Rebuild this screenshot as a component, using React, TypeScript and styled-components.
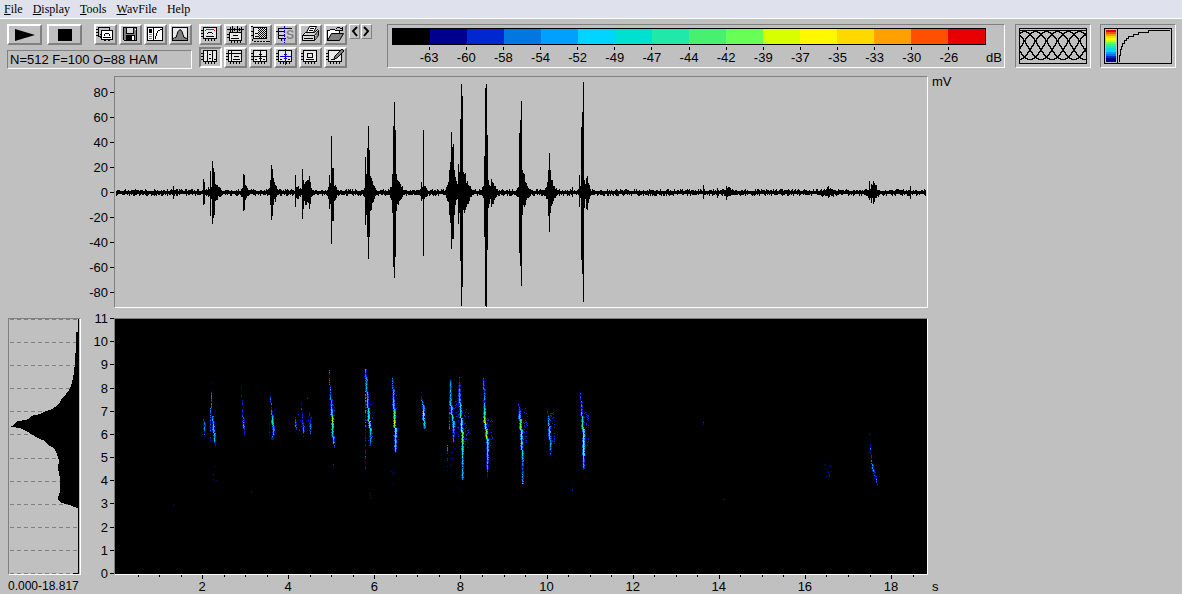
import React from "react";
import styled, { createGlobalStyle, css } from "styled-components";

const GlobalStyle = createGlobalStyle`
  *, *::before, *::after { box-sizing: border-box; }
  body { margin: 0; background: #c0c0c0; }
`;

const Page = styled.div`
  min-height: 100vh;
  background: #c0c0c0;
  color: #000;
  font: 13px/15px "Liberation Sans", Arial, sans-serif;
`;

/* ---------- menu ---------- */

const MenuBar = styled.nav`
  display: flex;
  gap: 10px;
  height: 19px;
  padding-left: 4px;
  background: #dfe2ec;
  border-bottom: 1px solid #fff;
`;

const MenuItem = styled.button`
  padding: 0;
  border: 0;
  background: none;
  color: #000;
  font: 12px/18px "Liberation Serif", "Times New Roman", serif;
`;

/* ---------- toolbar ---------- */

const Toolbar = styled.header`
  display: flex;
  align-items: flex-start;
  height: 57px;
  padding: 5px 6px 0 7px;
`;

const sunken = css`
  border: 1px solid;
  border-color: #808080 #fff #fff #808080;
`;

const ToolColumn = styled.div`
  display: flex;
  flex-direction: column;
  flex: none;
  gap: 5px;
  width: 185px;
  margin-right: 7px;
`;

const ToolRow = styled.div`
  display: flex;
  gap: 2px;
`;

const ToolGrid = styled.div`
  display: grid;
  flex: none;
  grid-template-columns: repeat(6, 23px);
  gap: 2px;
  margin-right: 2px;
`;

const ToolButton = styled.button<{ $pressed?: boolean }>`
  display: flex;
  align-items: center;
  justify-content: center;
  width: 23px;
  height: 21px;
  padding: 0;
  background: #c0c0c0;
  border: 2px solid;
  border-color: ${(p) => (p.$pressed ? "#808080 #fff #fff #808080" : "#fff #808080 #808080 #fff")};
`;

const TransportButton = styled(ToolButton)`
  width: 35px;
`;

const TransportGroup = styled.div`
  display: flex;
  gap: 5px;
  margin-right: 10px;
`;

const StepButton = styled(ToolButton)`
  width: 11px;
  height: 15px;
  border-width: 1px;
`;

const StepGroup = styled.div`
  display: flex;
  flex: none;
  gap: 1px;
  margin-right: 15px;
`;

const Settings = styled.output`
  display: block;
  height: 19px;
  padding-left: 2px;
  line-height: 17px;
  white-space: nowrap;
  ${sunken}
`;

/* ---------- colour legend ---------- */

const Legend = styled.section`
  ${sunken}
  display: grid;
  grid-template-columns: 1fr 16px;
  flex: 1;
  min-width: 0;
  height: 44px;
  margin-right: 10px;
  padding: 3px 2px 0 4px;
`;

const Swatches = styled.div`
  display: flex;
  height: 17px;
  border: 1px solid #000;
`;

const Swatch = styled.span<{ $color: string }>`
  flex: 1;
  background: ${(p) => p.$color};
`;

const LegendScale = styled.div`
  display: grid;
  grid-row: 2;
  grid-template-columns: repeat(32, 1fr);
`;

const LegendLabel = styled.span<{ $index: number }>`
  display: flex;
  flex-direction: column;
  align-items: center;
  grid-column: ${(p) => p.$index * 2 + 2} / span 2;
  &::before {
    content: "";
    width: 1px;
    height: 3px;
    background: #000;
  }
`;

const LegendUnit = styled.span`
  grid-row: 2;
  padding-top: 3px;
`;

const CurvePanel = styled.button`
  ${sunken}
  flex: none;
  width: 76px;
  height: 44px;
  margin-right: 9px;
  padding: 3px;
  background: #c0c0c0;
  &:last-child { margin-right: 0; }
  svg { display: block; }
`;

/* ---------- plots ---------- */

const Workspace = styled.main`
  display: grid;
  grid-template-columns: 73px 33px minmax(0, 1fr) 254px;
  padding-left: 8px;
`;

const WaveRow = styled.div`
  display: grid;
  grid-column: 1 / -1;
  grid-template-columns: subgrid;
  height: 232px;
  margin-bottom: 10px;
`;

const SpectrumRow = styled(WaveRow)`
  height: 257px;
  margin-bottom: 0;
`;

const WaveAxis = styled.div`
  grid-column: 2;
  padding-top: 4px;
`;

const FrequencyAxis = styled.div`
  display: flex;
  flex-direction: column;
  margin: -11px 0 -10px;
`;

const AxisLabel = styled.div<{ $fill?: boolean }>`
  display: flex;
  align-items: center;
  justify-content: flex-end;
  gap: 2px;
  ${(p) => (p.$fill ? "flex: 1;" : "height: 25px;")}
  &::after {
    content: "";
    width: 4px;
    height: 1px;
    background: #000;
  }
`;

const Frame = styled.div`
  ${sunken}
  min-width: 0;
  min-height: 0;
  height: 100%;
  svg { display: block; width: 100%; height: 100%; }
`;

const UnitLabel = styled.span`
  padding-left: 4px;
  line-height: 12px;
`;

const Caption = styled.div`
  padding-top: 4px;
  font-size: 12px;
  white-space: nowrap;
`;

const TimeAxis = styled.div`
  grid-column: 3;
  min-width: 0;
`;

const TimeTicks = styled.svg`
  display: block;
  width: 100%;
  height: 4px;
`;

const TimeLabels = styled.div`
  display: flex;
  margin: 0 -6px 0 2px;
`;

const TimeLabel = styled.span<{ $seconds: number }>`
  flex: ${(p) => p.$seconds} 1 0;
  text-align: center;
`;

const AxisUnit = styled.span`
  padding: 4px 0 0 4px;
`;

/* ---------- data ---------- */

const COLORS = [
  "#000000", "#00008f", "#0028d0", "#0078e0", "#00a0ff", "#00d4ff", "#00e0d0", "#20e8a8",
  "#48f070", "#68ff58", "#d8ff00", "#fff800", "#ffd800", "#ffa000", "#ff5000", "#e80000",
];

const DECIBELS = [-63, -60, -58, -54, -52, -49, -47, -44, -42, -39, -37, -35, -33, -30, -26];
const MILLIVOLTS = [80, 60, 40, 20, 0, -20, -40, -60, -80];
const KILOHERTZ = [11, 10, 9, 8, 7, 6, 5, 4, 3, 2, 1, 0];
const SECONDS = [2, 4, 6, 8, 10, 12, 14, 16, 18];

/* repeatable noise, so that the plots are the same on every load */
function makeRandom(seed: number) {
  let a = seed;
  return () => {
    a = (a + 0x6d2b79f5) | 0;
    let t = Math.imul(a ^ (a >>> 15), 1 | a);
    t = (t + Math.imul(t ^ (t >>> 7), 61 | t)) ^ t;
    return ((t ^ (t >>> 14)) >>> 0) / 4294967296;
  };
}

/* column, height above zero, depth below zero */
const PEAKS: [number, number, number][] = [
  [173, 6, 6], [203, 13, 12], [204, 10, 11], [210, 21, 23], [212, 31, 31], [213, 24, 25], [214, 20, 22],
  [243, 18, 18], [244, 17, 17], [270, 12, 12], [271, 27, 27], [272, 23, 23], [273, 11, 12],
  [295, 17, 14], [302, 23, 26], [303, 12, 16], [308, 12, 10], [309, 16, 16], [310, 10, 11],
  [329, 17, 16], [331, 56, 51], [332, 24, 28], [333, 24, 28], [365, 35, 32], [366, 18, 22],
  [367, 44, 44], [368, 66, 66], [369, 42, 44], [370, 16, 18], [371, 12, 12], [392, 18, 20],
  [393, 66, 74], [394, 90, 85], [395, 62, 64], [396, 18, 18], [421, 10, 8], [423, 62, 63],
  [449, 22, 22], [450, 30, 30], [451, 60, 56], [452, 45, 46], [453, 48, 46], [454, 22, 22],
  [458, 28, 31], [459, 20, 20], [460, 73, 68], [461, 108, 113], [462, 96, 94], [463, 20, 17],
  [484, 36, 44], [485, 104, 113], [486, 108, 114], [487, 57, 57], [488, 12, 14], [491, 13, 14],
  [519, 59, 60], [520, 72, 73], [521, 91, 93], [522, 22, 22], [525, 10, 11], [548, 22, 23],
  [549, 39, 39], [550, 22, 20], [552, 12, 11], [572, 5, 4], [579, 17, 14], [581, 65, 67],
  [582, 80, 81], [583, 110, 109], [584, 12, 15], [586, 14, 16], [587, 16, 17],
  [703, 7, 6], [717, 4, 5], [726, 6, 7], [828, 6, 5], [869, 11, 7], [871, 8, 10], [873, 11, 11],
  [874, 8, 8], [910, 6, 6],
];

/* centre, half width, amplitude of the swelling around each call */
const SWELLS: [number, number, number][] = [
  [214, 9, 8], [244, 5, 7], [273, 6, 11], [298, 5, 5], [306, 8, 11], [332, 6, 14], [370, 7, 18],
  [396, 8, 20], [423, 5, 9], [452, 8, 26], [464, 9, 20], [487, 7, 15], [492, 6, 12], [523, 8, 18],
  [550, 8, 15], [583, 6, 14], [587, 4, 13], [873, 7, 9], [727, 8, 3], [828, 9, 3],
];

function buildWave() {
  const rnd = makeRandom(7);
  const peaks = new Map(PEAKS.map(([x, up, down]) => [x, [up, down]]));
  let d = "";
  for (let x = 116; x < 926; x++) {
    let swell = 0;
    SWELLS.forEach(([c, w, a]) => {
      swell = Math.max(swell, a * Math.max(0, 1 - Math.abs(x - c) / w) ** 1.4);
    });
    const side = () => Math.round(0.8 + rnd() ** 1.5 * 2.4 + swell * (0.55 + rnd() * 0.5));
    const peak = peaks.get(x) ?? [0, 0];
    const up = Math.max(side(), peak[0]);
    const down = Math.max(side(), peak[1]);
    d += `M${x} ${192 - up}h1v${up + down + 1}h-1z`;
  }
  return d;
}

/* each streak is a run of x, y, palette level */
const STREAKS: [number, number, number][][] = [
  [[203, 417, 1], [204, 424, 4], [204, 438, 2]],
  [[211, 379, 0], [211, 391, 1], [211, 394, 3], [210, 420, 3], [210, 441, 1]],
  [[212, 416, 4], [213, 425, 6], [214, 440, 5], [215, 446, 1]],
  [[241, 385, 1], [242, 410, 2], [243, 424, 4], [244, 436, 2]],
  [[270, 396, 3], [271, 410, 3], [272, 420, 7], [273, 430, 4], [272, 440, 3]],
  [[269, 423, 2], [269, 435, 1]],
  [[295, 417, 2], [295, 424, 4], [296, 430, 1]],
  [[301, 400, 1], [302, 420, 3], [303, 430, 4], [303, 434, 1]],
  [[307, 397, 3], [307, 400, 1]],
  [[309, 412, 1], [310, 424, 4], [310, 434, 2]],
  [[329, 370, 3], [329, 378, 2], [330, 392, 3], [331, 408, 5], [332, 421, 10], [332, 432, 6], [333, 442, 4], [334, 448, 1]],
  [[333, 464, 2], [333, 471, 1]],
  [[365, 369, 4], [366, 385, 4], [367, 398, 5], [368, 418, 7], [369, 424, 9], [370, 432, 5], [370, 446, 2]],
  [[365, 369, 3], [365, 410, 3], [365, 430, 2], [365, 469, 2]],
  [[392, 378, 3], [393, 400, 5], [394, 418, 10], [395, 438, 8], [395, 446, 7], [395, 455, 1]],
  [[421, 392, 1], [421, 398, 3], [423, 407, 5], [423, 413, 10], [424, 429, 3]],
  [[450, 379, 3], [450, 400, 5], [451, 412, 7], [453, 424, 6], [453, 447, 1]],
  [[449, 395, 2], [449, 430, 3]],
  [[459, 376, 2], [459, 395, 5], [460, 410, 6], [461, 425, 10], [462, 438, 9], [462, 455, 5], [462, 480, 4]],
  [[458, 390, 2], [458, 448, 1]],
  [[447, 445, 3], [447, 471, 1]],
  [[483, 378, 3], [484, 400, 4], [484, 420, 9], [486, 432, 10], [487, 445, 8], [487, 465, 4], [487, 478, 1]],
  [[518, 402, 1], [519, 412, 5], [520, 425, 9], [521, 435, 10], [521, 445, 7], [522, 455, 5], [522, 470, 3], [522, 484, 4]],
  [[547, 410, 2], [548, 420, 4], [549, 432, 7], [550, 448, 4], [550, 458, 1]],
  [[580, 392, 2], [581, 410, 4], [582, 422, 7], [583, 435, 9], [583, 450, 12], [583, 457, 6], [583, 470, 3]],
  [[869, 433, 1], [870, 446, 2], [871, 460, 3], [872, 467, 4], [876, 480, 3], [877, 486, 1]],
  [[572, 487, 1], [572, 492, 1]],
  [[703, 420, 1], [703, 425, 2]],
  [[825, 464, 1], [830, 478, 1]],
];

/* faint echoes: left, top, width, height, number of specks */
const ECHOES: [number, number, number, number, number][] = [
  [298, 412, 14, 26, 26], [271, 410, 5, 24, 12], [446, 440, 9, 30, 18], [461, 408, 8, 40, 60],
  [452, 400, 6, 34, 34], [485, 416, 8, 34, 50], [522, 408, 6, 36, 50], [550, 412, 5, 32, 36],
  [584, 410, 5, 36, 42], [366, 400, 7, 46, 26], [393, 395, 6, 46, 24], [331, 398, 4, 48, 22],
  [211, 410, 6, 36, 14], [242, 408, 4, 26, 10], [213, 465, 4, 22, 5], [369, 492, 4, 7, 5],
  [390, 464, 4, 24, 5], [456, 484, 4, 8, 3], [723, 497, 2, 4, 2], [172, 504, 3, 3, 2],
  [823, 460, 9, 18, 8], [868, 446, 4, 22, 10], [248, 491, 4, 3, 2],
];

function buildSpectrogram() {
  const rnd = makeRandom(21);
  const paths: string[] = COLORS.map(() => "");
  const dot = (x: number, y: number, level: number) => {
    const l = Math.max(0, Math.min(COLORS.length - 1, Math.round(level)));
    if (l > 0) paths[l] += `M${x} ${y}h1v1h-1z`;
  };
  ECHOES.forEach(([x, y, w, h, n]) => {
    for (let i = 0; i < n; i++) {
      dot(x + Math.floor(rnd() * w), y + Math.floor(rnd() * h), n > 20 ? 1 + rnd() * 1.4 : 1);
    }
  });
  STREAKS.forEach((points) => {
    for (let i = 1; i < points.length; i++) {
      const [x0, y0, l0] = points[i - 1];
      const [x1, y1, l1] = points[i];
      for (let y = y0; y < y1; y++) {
        const t = (y - y0) / (y1 - y0);
        const level = l0 + (l1 - l0) * t;
        const x = Math.round(x0 + (x1 - x0) * t);
        if (level > 3) {
          dot(x - 1, y, Math.min(3, level * 0.5 * rnd()));
          dot(x + 1, y, Math.min(5, level * (0.1 + 0.6 * rnd())));
        }
        dot(x, y, level + rnd() * 3 - 2.2);
      }
    }
  });
  return paths;
}

const WAVE = buildWave();
const SPECTROGRAM = buildSpectrogram();

const SPECTRUM =
  "M79 319H78V332H76V345H76L75 362L74 372L73 378L71 386L69 390L66 394L62 398L60 402L57 406L52 409" +
  "L46 411L40 414L31 416L30 418L26 420L18 421L15 423L14 425L11 426V427L20 428L28 432L33 435L38 438L45 441" +
  "L48 445L54 448L56 452L58 457L59 461L58 468L60 478L60 492L59 495L58 498V500L62 503L70 505L77 508H78V573H73V574H79Z";

/* ---------- icons ---------- */

const Icon = ({ children }: { children: React.ReactNode }) => (
  <svg width="19" height="17" viewBox="0 0 19 17" fill="none" stroke="#000" shapeRendering="crispEdges" aria-hidden="true">
    {children}
  </svg>
);

const PlotFrame = () => (
  <>
    <path d="M2 2h14v11H2z" fill="#e8e8e8" stroke="none" />
    <path d="M2.500 1.500h13v11h-13zM0 4.500h2M0 7.500h2M0 10.500h2M4.500 13v2M7.500 13v2M10.500 13v2M13.500 13v2" />
  </>
);

const icons: Record<string, React.ReactNode> = {
  "Copy plots": (
    <Icon>
      <path d="M2.5 1.5h11v9h-11zM0 3.5h2M0 6.5h2M0 9.5h2" />
      <path d="M5.5 4.5h11v9h-11z" fill="#fff" />
      <path d="M4 8.5h2M4 11.5h2M9 7.5h4M8.5 8v2M13.5 8v2M7 11.5h8M8 14.5h2M12 14.5h2" />
    </Icon>
  ),
  "Save": (
    <Icon>
      <path d="M2.5 1.5h13v13h-12l-1-1z" fill="#808080" />
      <path d="M5.5 1.5h7v6h-7z" fill="#d8d8d8" />
      <path d="M5 9h9v6H5z" fill="#000" stroke="none" />
      <path d="M11 10h2v4h-2z" fill="#fff" stroke="none" />
      <path d="M14 3.5h1" stroke="#fff" />
    </Icon>
  ),
  "Transfer curve": (
    <Icon>
      <path d="M1.5 1.5h15v13h-15z" fill="#fff" />
      <path d="M3 3h3v4H3z" fill="#000" stroke="none" />
      <path d="M3 8.5h3M3 10.5h3M3 12.5h3" stroke="#808080" />
      <path d="M7.5 2v12M9.5 13v-3M10.5 10V7M11.5 7V5M12 4.5h2M14 3.5h2" />
    </Icon>
  ),
  "Analysis window": (
    <Icon>
      <path d="M1.5 1.5h15v13h-15z" fill="#e8e8e8" />
      <path d="M2 14v-1h1l2-2 1-3 1-3 2-2 2 2 1 3 1 3 2 2h1v1z" fill="#808080" stroke="none" />
      <path d="M2 12.500l3-1 1-3 1-3 2-2 2 2 1 3 1 3 3 1" shapeRendering="auto" />
    </Icon>
  ),
  "Envelope": (
    <Icon>
      <PlotFrame />
      <path d="M5 3.5h8M4 4.5h1M13 4.5h1" stroke="#e00000" />
      <path d="M7 6.5h4M6.5 7v1M11.5 7v1M5 10.5h8" />
    </Icon>
  ),
  "Waveform": (
    <Icon>
      <path d="M3.5 6.500h12v8h-12z" fill="#e8e8e8" />
      <path d="M1 3.5h17M4.500 1v5M6.500 0v6M8.500 2v3M11.5 0v6M13.500 2v3M15.500 1v5M1 8.5h2M1 11.5h2M7 9.5h5M5 12.500h8M5.5 15v2M8.5 15v2M11.5 15v2M14.5 15v2" />
    </Icon>
  ),
  "Select range": (
    <Icon>
      <path d="M2 2h14v11H2z" fill="#e8e8e8" stroke="none" />
      <path d="M2.500 1.5h13v11h-13zM0 .5h2M17 15.5h2M0 5.5h2M0 9.5h2M4 7.5h3M4 10.5h3" />
      <path d="M7 2.5h8M7 4.5h8M7 6.5h8M7 8.5h8M7 10.5h8" strokeDasharray="1 1" />
      <path d="M8 3.5h7M8 5.5h7M8 7.5h7M8 9.5h7M8 11.5h7" strokeDasharray="1 1" />
      <path d="M1.5 13v3M3 15.5h14" strokeDasharray="2 1" />
    </Icon>
  ),
  "Scroll": (
    <Icon>
      <path d="M2 2h14v11H2z" fill="#d0d0d0" stroke="none" />
      <path d="M2.5 2v11M2 2.5h14M0 5.5h8M2 9.5h6M2 12.5h8M5.5 13v2" />
      <path d="M8.5 0v17" stroke="#0000e0" strokeDasharray="3 1" />
      <text x="10" y="13" fill="#808080" stroke="none" fontFamily="Liberation Sans, sans-serif" fontWeight="700" fontSize="12">S</text>
    </Icon>
  ),
  "Print": (
    <Icon>
      <path d="M5.5 6.500l3-6h7l-3 6" fill="#fff" shapeRendering="auto" />
      <path d="M9 2.500h4M8 4.500h4" />
      <path d="M1.500 9.500l3-3h9l3-3 1 1v5l-4 5h-12z" fill="#d8d8d8" shapeRendering="auto" />
      <path d="M1.500 9.500h12v5M13.500 9.500l4-5M3 12.500h9" shapeRendering="auto" />
      <path d="M14 10h1v3h-1zM15 8h1v4h-1zM16 7h1v3h-1z" fill="#808080" stroke="none" />
    </Icon>
  ),
  "Open": (
    <Icon>
      <path d="M1.5 14.5v-10h2l1-1h4l1 1h4v3" fill="#fff" />
      <path d="M1.5 14.5l4-7h12l-4 7z" fill="#808080" shapeRendering="auto" />
      <path d="M10 2.5h1M11 1.5h3M14 2.5h2M16.5 1v4M14 4.5h3" />
    </Icon>
  ),
  "Vertical grid": (
    <Icon>
      <PlotFrame />
      <path d="M6.500 2v11M11.5 2v11M8 5.5h2M8 9.5h2M13 10.5h2" />
    </Icon>
  ),
  "Axes": (
    <Icon>
      <PlotFrame />
      <path d="M5.5 2v11M2 4.5h13M8 7.5h5M7 10.5h7" />
    </Icon>
  ),
  "Cursor": (
    <Icon>
      <PlotFrame />
      <path d="M9.5 2v11M3 7.5h12M8 5.5h3M8 9.5h3M4 10.5h2M12 10.5h2" />
    </Icon>
  ),
  "Marker": (
    <Icon>
      <PlotFrame />
      <path d="M4 10.5h2M12 10.5h2" />
      <path d="M9.5 0v16M4 7.5h11M8 5.5h3M8 9.5h3" stroke="#0000e0" />
    </Icon>
  ),
  "Zoom box": (
    <Icon>
      <PlotFrame />
      <path d="M6.500 4.5h5v4h-5zM5 10.5h8" />
    </Icon>
  ),
  "Annotate": (
    <Icon>
      <PlotFrame />
      <path d="M8 10l1-3 7-7 2 2-7 7z" fill="#808080" shapeRendering="auto" />
      <path d="M5 10.5h4" />
    </Icon>
  ),
};

const FILE_TOOLS = ["Copy plots", "Save", "Transfer curve", "Analysis window"];
const PLOT_TOOLS = [
  "Envelope", "Waveform", "Select range", "Scroll", "Print", "Open",
  "Vertical grid", "Axes", "Cursor", "Marker", "Zoom box", "Annotate",
];

function buildWindows() {
  const span = 55;
  let d = "";
  for (let start = -span; start < 70; start += 11) {
    for (let x = 0; x <= span; x++) {
      const y = 31 - 28 * Math.sin((Math.PI * x) / span) ** 2;
      d += `${x === 0 ? "M" : "L"}${start + x} ${Math.round(y) + 0.5}`;
    }
  }
  return d;
}

const WindowCurves = () => (
  <svg width="68" height="36" viewBox="0 0 68 36" fill="none" stroke="#000" shapeRendering="crispEdges" aria-hidden="true">
    <path d={buildWindows()} />
    <path d="M.5 .5h67v35h-67zM0 2.5h68" />
  </svg>
);

const ContrastCurve = () => (
  <svg width="68" height="36" viewBox="0 0 68 36" fill="none" stroke="#000" shapeRendering="crispEdges" aria-hidden="true">
    {COLORS.slice(1).reverse().map((c, i) => (
      <rect key={c} x="2" y={2 + i * 2} width="10" height={i === 14 ? 4 : 2} fill={c} stroke="none" />
    ))}
    <path d="M.5 .5h67v35h-67zM13.5 0v36M15.5 34v-7h1v-6h1v-3h1v-3h2v-3h2v-2h2v-2h5v-2h5v-2h10v-2h21" />
  </svg>
);

/* ---------- application ---------- */

export default function App() {
  return (
    <Page>
      <GlobalStyle />
      <MenuBar aria-label="Main menu">
        <MenuItem><u>F</u>ile</MenuItem>
        <MenuItem><u>D</u>isplay</MenuItem>
        <MenuItem><u>T</u>ools</MenuItem>
        <MenuItem><u>W</u>avFile</MenuItem>
        <MenuItem>Help</MenuItem>
      </MenuBar>

      <Toolbar>
        <ToolColumn>
          <ToolRow>
            <TransportGroup>
              <TransportButton aria-label="Play">
                <svg width="20" height="12" viewBox="0 0 20 12" aria-hidden="true"><path d="M0 0l20 6L0 12z" /></svg>
              </TransportButton>
              <TransportButton aria-label="Stop">
                <svg width="14" height="12" viewBox="0 0 14 12" aria-hidden="true"><path d="M0 0h14v12H0z" /></svg>
              </TransportButton>
            </TransportGroup>
            {FILE_TOOLS.map((name) => (
              <ToolButton key={name} aria-label={name}>{icons[name]}</ToolButton>
            ))}
          </ToolRow>
          <Settings>N=512 F=100 O=88 HAM</Settings>
        </ToolColumn>

        <ToolGrid>
          {PLOT_TOOLS.map((name) => (
            <ToolButton key={name} aria-label={name} $pressed={name === "Vertical grid"}>{icons[name]}</ToolButton>
          ))}
        </ToolGrid>

        <StepGroup>
          <StepButton aria-label="Previous">
            <svg width="7" height="11" viewBox="0 0 7 11" fill="none" stroke="#000" strokeWidth="2" aria-hidden="true"><path d="M6 1L2 5L6 10" /></svg>
          </StepButton>
          <StepButton aria-label="Next">
            <svg width="7" height="11" viewBox="0 0 7 11" fill="none" stroke="#000" strokeWidth="2" aria-hidden="true"><path d="M1 1l4 4L1 10" /></svg>
          </StepButton>
        </StepGroup>

        <Legend aria-label="Level scale">
          <Swatches>
            {COLORS.map((c) => <Swatch key={c} $color={c} />)}
          </Swatches>
          <LegendScale>
            {DECIBELS.map((db, i) => <LegendLabel key={db} $index={i}>{db}</LegendLabel>)}
          </LegendScale>
          <LegendUnit>dB</LegendUnit>
        </Legend>

        <CurvePanel aria-label="Window overlap"><WindowCurves /></CurvePanel>
        <CurvePanel aria-label="Contrast"><ContrastCurve /></CurvePanel>
      </Toolbar>

      <Workspace>
        <WaveRow>
          <WaveAxis>
            {MILLIVOLTS.map((v) => <AxisLabel key={v}>{v}</AxisLabel>)}
          </WaveAxis>
          <Frame>
            <svg viewBox="115 77 812 230" preserveAspectRatio="none" shapeRendering="crispEdges" role="img" aria-label="Waveform">
              <path d={WAVE} />
            </svg>
          </Frame>
          <UnitLabel>mV</UnitLabel>
        </WaveRow>

        <SpectrumRow>
          <Frame>
            <svg viewBox="9 319 71 255" preserveAspectRatio="none" shapeRendering="crispEdges" role="img" aria-label="Mean spectrum">
              {KILOHERTZ.map((k) => (
                <path key={k} d={`M10 ${Math.round(573 - (k * 254) / 11) + 0.5}H78`} stroke="#808080" strokeDasharray="4 3" />
              ))}
              <path d={SPECTRUM} />
            </svg>
          </Frame>
          <FrequencyAxis>
            {KILOHERTZ.map((k) => <AxisLabel key={k} $fill>{k}</AxisLabel>)}
          </FrequencyAxis>
          <Frame>
            <svg viewBox="115 319 812 255" preserveAspectRatio="none" shapeRendering="crispEdges" role="img" aria-label="Spectrogram">
              <rect x="115" y="319" width="812" height="255" />
              {SPECTROGRAM.map((d, i) => d && <path key={i} d={d} fill={COLORS[i]} />)}
            </svg>
          </Frame>
        </SpectrumRow>

        <Caption>0.000-18.817</Caption>
        <TimeAxis>
          <TimeTicks viewBox="114 0 814 4" preserveAspectRatio="none" shapeRendering="crispEdges" aria-hidden="true">
            {Array.from({ length: 37 }, (_, i) => i + 1).map((i) => (
              <rect key={i} x={Math.round(116 + i * 21.53)} y="0" width="1" height={i % 4 === 0 ? 4 : 2} />
            ))}
          </TimeTicks>
          <TimeLabels>
            <TimeLabel $seconds={1} />
            {SECONDS.map((s) => <TimeLabel key={s} $seconds={2}>{s}</TimeLabel>)}
          </TimeLabels>
        </TimeAxis>
        <AxisUnit>s</AxisUnit>
      </Workspace>
    </Page>
  );
}
